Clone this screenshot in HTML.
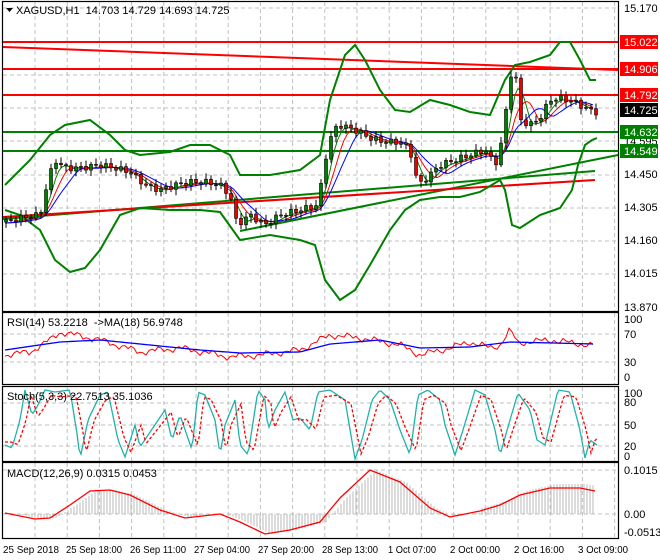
<!DOCTYPE html>
<html><head><meta charset="utf-8"><style>
body{margin:0;background:#fff;width:660px;height:560px;overflow:hidden}
svg{display:block;font-family:"Liberation Sans",sans-serif}
</style></head><body>
<svg id="s" width="660" height="560" xmlns="http://www.w3.org/2000/svg">
<rect width="660" height="560" fill="#fff"/>
<g id="grid" stroke="#c0c0c0" stroke-dasharray="4,3" stroke-width="1"></g>
<g id="main"></g>
<g fill="none" stroke="#000" stroke-width="1.2">
<rect x="2.5" y="1.5" width="616" height="310"/>
<rect x="2.5" y="312.5" width="616" height="72"/>
<rect x="2.5" y="386.5" width="616" height="75"/>
<rect x="2.5" y="462.5" width="616" height="76"/>
</g>
<g font-size="11" fill="#000" id="labels">
<text x="16" y="14">XAGUSD,H1&#160;&#160;14.703 14.729 14.693 14.725</text>
<path d="M6 8h7l-3.5 4z" fill="#000"/>
<text x="7" y="326">RSI(14) 53.2218&#160;&#160;-&gt;MA(18) 56.9748</text>
<text x="7" y="400">Stoch(5,3,3) 22.7513 35.1036</text>
<text x="7" y="477">MACD(12,26,9) 0.0315 0.0453</text>
<text x="624" y="12">15.170</text><text x="624" y="178">14.450</text><text x="624" y="211">14.305</text><text x="624" y="244">14.160</text><text x="624" y="277">14.015</text><text x="624" y="311">13.870</text><text x="624" y="145">14.595</text>
<text x="624" y="323">100</text><text x="624" y="338">70</text><text x="624" y="366">30</text><text x="624" y="381">0</text>
<text x="624" y="397">100</text><text x="624" y="406">80</text><text x="624" y="429">50</text><text x="624" y="450">20</text><text x="624" y="460">0</text>
<text x="624" y="474">0.1015</text><text x="624" y="518">0.00</text><text x="624" y="536">-0.0513</text>
</g>
<g font-size="10.5" fill="#000">
<text x="3" y="553" textLength="56" lengthAdjust="spacingAndGlyphs">25 Sep 2018</text><text x="66" y="553" textLength="56" lengthAdjust="spacingAndGlyphs">25 Sep 18:00</text><text x="130" y="553" textLength="56" lengthAdjust="spacingAndGlyphs">26 Sep 11:00</text><text x="194" y="553" textLength="56" lengthAdjust="spacingAndGlyphs">27 Sep 04:00</text><text x="258" y="553" textLength="56" lengthAdjust="spacingAndGlyphs">27 Sep 20:00</text><text x="322" y="553" textLength="56" lengthAdjust="spacingAndGlyphs">28 Sep 13:00</text><text x="388" y="553" textLength="48" lengthAdjust="spacingAndGlyphs">1 Oct 07:00</text><text x="450" y="553" textLength="50" lengthAdjust="spacingAndGlyphs">2 Oct 00:00</text><text x="514" y="553" textLength="50" lengthAdjust="spacingAndGlyphs">2 Oct 16:00</text><text x="578" y="553" textLength="50" lengthAdjust="spacingAndGlyphs">3 Oct 09:00</text>
</g>
<g id="tags" font-size="11"></g>
</svg>
<script>
(function(){
var NS="http://www.w3.org/2000/svg";
function el(p,t,a){var e=document.createElementNS(NS,t);for(var q in a)e.setAttribute(q,a[q]);document.getElementById(p).appendChild(e);return e;}
function interp(pts,x){for(var i=0;i<pts.length-1;i++){if(x>=pts[i][0]&&x<=pts[i+1][0]){var t=(x-pts[i][0])/(pts[i+1][0]-pts[i][0]);return pts[i][1]+t*(pts[i+1][1]-pts[i][1]);}}return x<pts[0][0]?pts[0][1]:pts[pts.length-1][1];}
function pl(g,pts,col,w,dash){var a={points:pts.map(function(p){return p.join(",")}).join(" "),fill:"none",stroke:col,"stroke-width":w||1};if(dash)a["stroke-dasharray"]=dash;el(g,"polyline",a);}
var x;
for(x=35;x<618;x+=32.2){el("grid","line",{x1:x,y1:2,x2:x,y2:311});el("grid","line",{x1:x,y1:313,x2:x,y2:384});el("grid","line",{x1:x,y1:387,x2:x,y2:461});el("grid","line",{x1:x,y1:463,x2:x,y2:538});}
[8,42,75,108,141,175,208,241,274].forEach(function(y){el("grid","line",{x1:3,y1:y,x2:618,y2:y});});
[334,362,403,425,446,470,514].forEach(function(y){el("grid","line",{x1:3,y1:y,x2:618,y2:y});});
[[42,"#f00"],[69,"#f00"],[95,"#f00"]].forEach(function(l){el("main","line",{x1:3,y1:l[0],x2:618,y2:l[0],stroke:l[1],"stroke-width":2});});
[[132,"#008000"],[151,"#008000"]].forEach(function(l){el("main","line",{x1:3,y1:l[0],x2:618,y2:l[0],stroke:l[1],"stroke-width":2});});
el("main","line",{x1:3,y1:47,x2:618,y2:70,stroke:"#f00","stroke-width":2});
el("main","line",{x1:240,y1:231,x2:618,y2:155,stroke:"#008000","stroke-width":2});
el("main","line",{x1:3,y1:219,x2:595,y2:171,stroke:"#008000","stroke-width":2});
el("main","line",{x1:3,y1:217,x2:595,y2:180,stroke:"#e00","stroke-width":2});
pl("main",[[5,185],[30,160],[50,135],[65,125],[90,120],[110,135],[125,150],[140,155],[170,152],[190,145],[210,145],[230,155],[240,175],[270,175],[300,170],[320,155],[330,100],[345,55],[355,45],[365,60],[380,90],[395,110],[410,112],[430,100],[450,105],[470,112],[490,115],[505,80],[515,65],[530,62],[550,55],[560,42],[570,42],[580,60],[590,80],[596,80]],"#008000",2);
pl("main",[[5,210],[20,215],[40,230],[55,260],[70,272],[85,268],[100,250],[120,215],[140,208],[170,210],[200,210],[220,212],[240,240],[270,235],[300,240],[315,245],[325,280],[340,300],[355,290],[370,265],[390,230],[405,210],[420,200],[440,197],[460,197],[480,192],[500,180],[505,190],[512,225],[520,228],[540,215],[560,208],[572,190],[578,165],[585,145],[592,140],[597,138]],"#008000",2);
var price=[[5,222],[20,218],[40,215],[48,180],[55,160],[65,168],[80,168],[100,165],[115,168],[130,172],[145,185],[160,190],[175,185],[190,182],[205,182],[220,185],[230,195],[237,225],[250,215],[265,225],[280,215],[300,210],[318,205],[325,160],[333,130],[340,125],[355,130],[370,138],[385,142],[400,142],[410,150],[418,185],[425,180],[440,165],[455,160],[470,155],[485,150],[495,165],[500,150],[505,120],[510,75],[515,70],[520,120],[530,125],[540,118],[550,100],[560,98],[575,102],[585,108],[595,112]];
function ma(n,col){var p=[];for(var xx=5;xx<=595;xx+=3){var s=0;for(var j=0;j<n;j++)s+=interp(price,xx-j*3);p.push([xx,s/n+1]);}pl("main",p,col,1);}
ma(5,"#008000");ma(8,"#f00");ma(12,"#00f");
var prev=interp(price,4);
for(x=6;x<=596;x+=5){var c=interp(price,x)+Math.sin(x*1.7)*3;var o=prev;var hi=Math.min(o,c)-2-Math.abs(Math.sin(x))*4,lo=Math.max(o,c)+2+Math.abs(Math.cos(x))*4;
el("main","line",{x1:x,y1:hi,x2:x,y2:lo,stroke:"#000"});
var bt=Math.min(o,c),h=Math.max(Math.abs(o-c),1);el("main","rect",{x:x-1.5,y:bt,width:3,height:h,fill:c<o?"#008000":"#e00",stroke:"#000","stroke-width":0.6});prev=c;}
function tag(y,txt,bg){el("tags","rect",{x:620,y:y-7,width:38,height:14,fill:bg});var t=el("tags","text",{x:624,y:y+4,fill:"#fff"});t.textContent=txt;}
tag(42,"15.022","#f00");tag(69,"14.906","#f00");tag(95,"14.792","#f00");tag(110,"14.725","#000");tag(132,"14.632","#008000");tag(151,"14.549","#008000");
var r=[],m=[];for(x=5;x<=595;x+=3){var base=interp([[5,355],[30,352],[50,340],[60,332],[75,335],[100,340],[140,352],[180,348],[230,357],[260,355],[300,350],[330,335],[360,338],[400,345],[420,355],[450,348],[470,342],[490,348],[500,345],[510,330],[518,343],[550,340],[595,346]],x);r.push([x,base+Math.sin(x*0.7)*2+Math.sin(x*0.23)*2]);m.push([x,interp([[5,350],[60,342],[100,340],[150,345],[200,350],[240,353],[300,352],[330,344],[380,340],[420,348],[470,347],[510,342],[595,344]],x)]);}
pl("main",r,"#f00",1);pl("main",m,"#00f",1.3);
var kp=[[5,445],[12,448],[20,420],[25,390],[32,415],[38,405],[45,390],[55,392],[70,390],[78,440],[80,459],[88,420],[100,395],[108,392],[118,440],[125,457],[135,425],[140,447],[165,410],[172,440],[180,415],[192,450],[198,392],[205,395],[215,420],[220,455],[225,425],[235,400],[240,445],[248,455],[258,390],[265,400],[268,430],[275,410],[285,392],[293,420],[300,418],[310,430],[318,392],[330,390],[345,400],[355,459],[362,440],[372,400],[380,390],[390,400],[400,430],[410,455],[418,395],[428,390],[440,400],[445,425],[455,455],[463,430],[475,390],[485,395],[495,430],[500,455],[510,420],[518,393],[530,410],[537,440],[545,445],[558,390],[570,392],[580,430],[585,458],[590,440],[597,445]];
var k=[],d=[];for(x=5;x<=597;x+=2){k.push([x,interp(kp,x)]);d.push([x,interp(kp,x-6)*0.85+425*0.15]);}
pl("main",k,"#20b2aa",1.3);pl("main",d,"#f00",1.3,"3,2");
var sig=[[5,513],[35,519],[50,518],[70,505],[90,491],[110,490],[130,495],[160,510],[185,518],[220,514],[240,522],[265,534],[290,530],[320,522],[340,498],[370,470],[400,482],[430,508],[450,517],[480,511],[500,505],[520,495],[550,488],[580,488],[595,491]];
for(x=5;x<=595;x+=3){var v=interp(sig,x-6)+((x>480)?-4:0);el("main","line",{x1:x,y1:514,x2:x,y2:v,stroke:"#b8b8b8"});}
pl("main",sig,"#f00",1.3);
})();
</script>
</body></html>
